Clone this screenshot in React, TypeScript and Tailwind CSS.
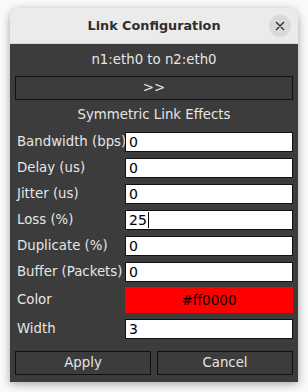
import React from "react";

const font = { fontFamily: '"DejaVu Sans", "Liberation Sans", sans-serif' };

function Row({ label, value, cursor }: { label: string; value: string; cursor?: boolean }) {
  return (
    <div className="flex h-[26px] items-center">
      <div className="w-[110px] pl-[2px] text-[13.3px] text-[#e6e6e6] whitespace-nowrap">{label}</div>
      <div className="flex h-[20px] w-[168px] items-center border border-[#111] bg-white pl-[3px] text-[14px] text-black">
        <span>{value}</span>
        {cursor && <span className="ml-[1px] inline-block h-[16px] w-[1px] bg-black" />}
      </div>
    </div>
  );
}

export default function App() {
  return (
    <div className="h-[392px] w-[308px] overflow-hidden bg-[#fafafa] pl-[10px] pt-[8px]" style={font}>
      <div className="flex h-[374px] w-[288px] flex-col overflow-hidden rounded-t-[10px] shadow-[0_2px_10px_rgba(0,0,0,0.35)]">
        <div className="relative flex h-[36px] items-center justify-center bg-[#ebebeb] border-b border-[#d6d6d6]">
          <span className="text-[12.8px] font-bold text-[#2e2e2e]">Link Configuration</span>
          <div className="absolute right-[7px] top-[7px] flex h-[22px] w-[22px] items-center justify-center rounded-full bg-[#d9d9d9]">
            <svg width="10" height="10" viewBox="0 0 10 10">
              <path d="M1.5 1.5 L8.5 8.5 M8.5 1.5 L1.5 8.5" stroke="#2e2e2e" strokeWidth="1.4" strokeLinecap="round" />
            </svg>
          </div>
        </div>
        <div className="flex flex-1 flex-col bg-[#3c3c3c] px-[5px]">
          <div className="flex h-[32px] items-center justify-center text-[13.3px] text-[#e6e6e6]">n1:eth0 to n2:eth0</div>
          <div className="flex h-[24px] items-center justify-center border border-[#111] bg-[#3c3c3c] text-[13.3px] text-[#e6e6e6]">
            &gt;&gt;
          </div>
          <div className="flex h-[29px] items-center justify-center text-[13.3px] text-[#e6e6e6]">Symmetric Link Effects</div>
          <Row label="Bandwidth (bps)" value="0" />
          <Row label="Delay (us)" value="0" />
          <Row label="Jitter (us)" value="0" />
          <Row label="Loss (%)" value="25" cursor />
          <Row label="Duplicate (%)" value="0" />
          <Row label="Buffer (Packets)" value="0" />
          <div className="mt-[2px] flex h-[26px] items-center">
            <div className="w-[110px] pl-[2px] text-[13.3px] text-[#e6e6e6]">Color</div>
            <div className="flex h-[26px] w-[168px] items-center justify-center bg-[#ff0000] text-[13.5px] text-black">#ff0000</div>
          </div>
          <div className="flex h-[32px] items-center">
            <div className="w-[110px] pl-[2px] text-[13.3px] text-[#e6e6e6]">Width</div>
            <div className="flex h-[20px] w-[168px] items-center border border-[#111] bg-white pl-[3px] text-[14px] text-black">3</div>
          </div>
          <div className="mt-[6px] grid grid-cols-2 gap-[6px]">
            <div className="flex h-[24px] items-center justify-center border border-[#111] text-[13.3px] text-[#e6e6e6]">Apply</div>
            <div className="flex h-[24px] items-center justify-center border border-[#111] text-[13.3px] text-[#e6e6e6]">Cancel</div>
          </div>
        </div>
      </div>
    </div>
  );
}
